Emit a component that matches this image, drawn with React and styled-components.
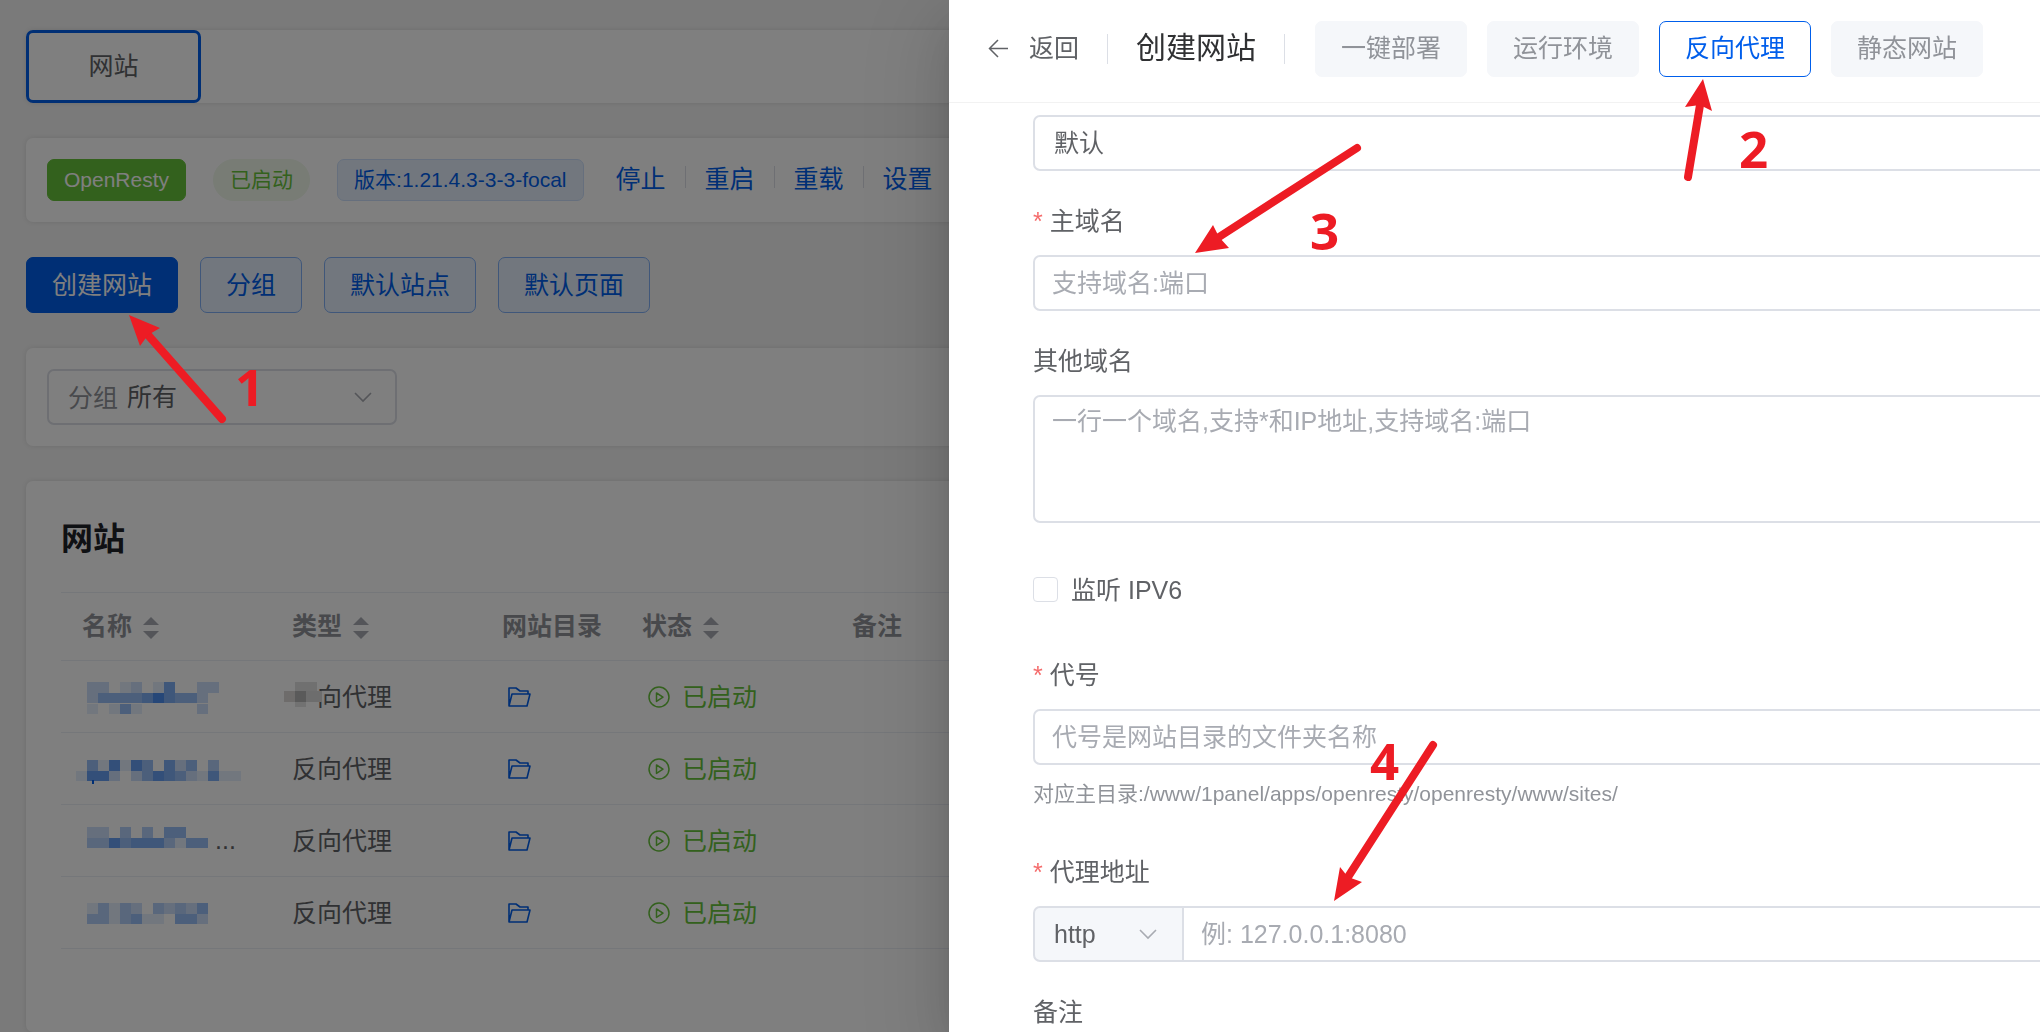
import { useState } from "react";
import styled, { createGlobalStyle, css } from "styled-components";

const PRIMARY = "#005eeb";
const SUCCESS = "#67c23a";
const DANGER = "#f56c6c";
const MARK = "#ed1c24";
const TEXT = "#606266";
const TEXT_LIGHT = "#909399";
const PLACEHOLDER = "#a8abb2";
const BORDER = "#dcdfe6";
const BORDER_LIGHT = "#ebeef5";
const FONT_SIZE = "25px";
const FONT_SIZE_SMALL = "21px";

const WEBSITE_ACTIONS = ["停止", "重启", "重载", "设置"];
const TYPES = ["一键部署", "运行环境", "反向代理", "静态网站"];

// Each digit is the ink density of one mosaic cell
const WEBSITES = [
  {
    id: 1,
    top: 2,
    cells: ["022012015002200", "024444575442000", "010141000002000"],
    hideType: true,
  },
  { id: 2, top: 8, cells: ["041616405240300", "166202465421511"], tail: true },
  { id: 3, top: 3, cells: ["022030304400", "033645553144"], more: true },
  { id: 4, top: 7, cells: ["013132032324", "033134110442"] },
];

const ARROWS = [
  { tip: [129, 315], barbs: [[140, 346], [160, 328]], notch: [148, 335], tail: [222, 419] },
  { tip: [1703, 79], barbs: [[1685, 107], [1712, 111]], notch: [1700, 105], tail: [1688, 177] },
  { tip: [1195, 253], barbs: [[1213, 225], [1229, 248]], notch: [1219, 237], tail: [1357, 148] },
  { tip: [1334, 901], barbs: [[1340, 867], [1362, 882]], notch: [1348, 877], tail: [1433, 745] },
];

const STEPS = [
  { n: 1, x: 235, y: 364 },
  { n: 2, x: 1739, y: 126 },
  { n: 3, x: 1310, y: 208 },
  { n: 4, x: 1370, y: 738 },
];

function Mosaic({ top, cells, tail }) {
  const width = cells[0].length * 11;
  return (
    <svg width={width} height="34" viewBox={`0 0 ${width} 34`} aria-hidden="true">
      {cells.map((line, y) =>
        line.split("").map((value, x) => (
          <rect
            key={`${x}-${y}`}
            x={x * 11}
            y={top + y * 11}
            width="11"
            height={y === 0 ? 11 : 10}
            fill={PRIMARY}
            fillOpacity={Number(value) / 10}
          />
        ))
      )}
      {tail && <rect x="16" y="28" width="2" height="4" fill={PRIMARY} />}
    </svg>
  );
}

function Chevron() {
  return (
    <svg width="18" height="11" viewBox="0 0 18 11" fill="none" aria-hidden="true">
      <path d="M1 1l8 8 8-8" stroke={PLACEHOLDER} strokeWidth="1.6" />
    </svg>
  );
}

function SortIcon() {
  return (
    <svg width="16" height="24" viewBox="0 0 16 24" fill={PLACEHOLDER} aria-hidden="true">
      <path d="M0 9l8-8 8 8zM0 15l8 8 8-8z" />
    </svg>
  );
}

function FolderIcon() {
  return (
    <svg width="23" height="20" viewBox="0 0 23 20" fill="none" aria-hidden="true">
      <path
        d="M1 19V1h7l4 3h8v3M1 19L4 7h18l-3 12z"
        stroke={PRIMARY}
        strokeWidth="1.6"
        strokeLinejoin="round"
      />
    </svg>
  );
}

function PlayIcon() {
  return (
    <svg width="22" height="22" viewBox="0 0 22 22" fill="none" aria-hidden="true">
      <g stroke={SUCCESS} strokeWidth="1.5" strokeLinejoin="round">
        <circle cx="11" cy="11" r="10" />
        <path d="M8.5 7v8.4l6.5-4.2z" />
      </g>
    </svg>
  );
}

function BackIcon() {
  return (
    <svg width="21" height="19" viewBox="0 0 21 19" fill="none" aria-hidden="true">
      <path d="M20 9.5H1.5M10 1L1.5 9.5 10 18" stroke={TEXT} strokeWidth="1.5" />
    </svg>
  );
}

function WebsiteTable() {
  return (
    <TABLE>
      <colgroup>
        <col width="210" />
        <col width="210" />
        <col width="140" />
        <col width="210" />
        <col />
      </colgroup>
      <thead>
        <tr>
          <th>
            名称 <SortIcon />
          </th>
          <th>
            类型 <SortIcon />
          </th>
          <th>网站目录</th>
          <th>
            状态 <SortIcon />
          </th>
          <th>备注</th>
        </tr>
      </thead>
      <tbody>
        {WEBSITES.map((site) => (
          <tr key={site.id}>
            <td>
              <NAME>
                <Mosaic top={site.top} cells={site.cells} tail={site.tail} />
                {site.more && <span>...</span>}
              </NAME>
            </td>
            <td>
              <TYPE>
                反向代理
                {site.hideType && (
                  <svg width="38" height="34" viewBox="0 0 38 34" aria-hidden="true">
                    <path d="M8 0h26v34H8z" fill="#fff" />
                    <path d="M0 13h11v11H0z" fill="#dcd9d6" />
                    <path d="M11 4h22v9H11z" fill="#e0e0e0" />
                    <path d="M11 13h11v11H11z" fill="#b4b4b4" />
                    <path d="M22 13h16v11H22z" fill="#dadada" />
                    <path d="M11 24h11v5H11z" fill="#e4e4e4" />
                  </svg>
                )}
              </TYPE>
            </td>
            <td>
              <FOLDER type="button" aria-label="网站目录">
                <FolderIcon />
              </FOLDER>
            </td>
            <td>
              <STATUS type="button">
                <PlayIcon />
                <span>已启动</span>
              </STATUS>
            </td>
            <td />
          </tr>
        ))}
      </tbody>
    </TABLE>
  );
}

function CreateDrawer() {
  const [type, setType] = useState("反向代理");

  return (
    <DRAWER role="dialog" aria-label="创建网站">
      <DRAWER_HEADER>
        <BACK type="button">
          <BackIcon />
          <span>返回</span>
        </BACK>
        <DIVIDER />
        <h2>创建网站</h2>
        <DIVIDER />
        <TYPE_LIST>
          {TYPES.map((name) => (
            <TYPE_BUTTON
              key={name}
              type="button"
              $active={name === type}
              onClick={() => setType(name)}
            >
              {name}
            </TYPE_BUTTON>
          ))}
        </TYPE_LIST>
      </DRAWER_HEADER>

      <FORM onSubmit={(e) => e.preventDefault()}>
        <SELECT aria-label="分组">
          <option>默认</option>
        </SELECT>

        <FIELD>
          <LABEL htmlFor="primaryDomain" $required>
            主域名
          </LABEL>
          <INPUT id="primaryDomain" placeholder="支持域名:端口" />
        </FIELD>

        <FIELD>
          <LABEL htmlFor="otherDomains">其他域名</LABEL>
          <TEXTAREA
            id="otherDomains"
            placeholder="一行一个域名,支持*和IP地址,支持域名:端口"
          />
        </FIELD>

        <CHECK>
          <input id="ipv6" type="checkbox" />
          <label htmlFor="ipv6">监听 IPV6</label>
        </CHECK>

        <FIELD>
          <LABEL htmlFor="alias" $required>
            代号
          </LABEL>
          <INPUT id="alias" placeholder="代号是网站目录的文件夹名称" />
          <HELP>对应主目录:/www/1panel/apps/openresty/openresty/www/sites/</HELP>
        </FIELD>

        <FIELD>
          <LABEL htmlFor="proxy" $required>
            代理地址
          </LABEL>
          <INPUT_GROUP>
            <PREPEND>
              <select aria-label="协议">
                <option>http</option>
                <option>https</option>
              </select>
              <Chevron />
            </PREPEND>
            <INPUT id="proxy" placeholder="例: 127.0.0.1:8080" />
          </INPUT_GROUP>
        </FIELD>

        <FIELD>
          <LABEL htmlFor="remark">备注</LABEL>
          <INPUT id="remark" />
        </FIELD>
      </FORM>
    </DRAWER>
  );
}

function Annotations() {
  return (
    <MARKS>
      <svg width="100%" height="100%" aria-hidden="true">
        {ARROWS.map(({ tip, barbs, notch, tail }) => (
          <g key={tip.join()} fill={MARK} stroke={MARK}>
            <path
              d={`M${notch} L${tail}`}
              strokeWidth="8"
              strokeLinecap="round"
            />
            <path
              d={`M${tip} L${barbs[0]} L${notch} L${barbs[1]} Z`}
              stroke="none"
            />
          </g>
        ))}
      </svg>
      {STEPS.map((step) => (
        <STEP key={step.n} $x={step.x} $y={step.y}>
          {step.n}
        </STEP>
      ))}
    </MARKS>
  );
}

export default function App() {
  return (
    <>
      <GlobalStyle />
      <PAGE>
        <CARD $flush>
          <TAB type="button">网站</TAB>
        </CARD>

        <CARD>
          <STATUS_BAR>
            <TAG $kind="dark">OpenResty</TAG>
            <TAG $kind="success">已启动</TAG>
            <TAG $kind="primary">版本:1.21.4.3-3-3-focal</TAG>
            <LINKS>
              {WEBSITE_ACTIONS.map((name) => (
                <button key={name} type="button">
                  {name}
                </button>
              ))}
            </LINKS>
          </STATUS_BAR>
        </CARD>

        <TOOLBAR>
          <BUTTON type="button" $primary>
            创建网站
          </BUTTON>
          <BUTTON type="button">分组</BUTTON>
          <BUTTON type="button">默认站点</BUTTON>
          <BUTTON type="button">默认页面</BUTTON>
        </TOOLBAR>

        <CARD>
          <FILTER>
            <label htmlFor="group">分组</label>
            <select id="group">
              <option>所有</option>
            </select>
            <Chevron />
          </FILTER>
        </CARD>

        <CARD $grow>
          <CONTENT>
            <h1>网站</h1>
            <WebsiteTable />
          </CONTENT>
        </CARD>
      </PAGE>
      <OVERLAY>
        <CreateDrawer />
      </OVERLAY>
      <Annotations />
    </>
  );
}

const GlobalStyle = createGlobalStyle`
  * {
    box-sizing: border-box;
  }

  body {
    margin: 0;
    overflow: hidden;
    background-color: #f4f4f4;
    color: ${TEXT};
    font-family: "Liberation Sans", "Noto Sans CJK SC", sans-serif;
    font-size: ${FONT_SIZE};
  }

  button,
  input,
  select,
  textarea {
    font: inherit;
    color: inherit;
    margin: 0;
  }

  button {
    cursor: pointer;
    padding: 0;
    border: 0;
    background: none;
  }

  svg {
    flex-shrink: 0;
  }
`;

const PAGE = styled.main`
  display: flex;
  flex-direction: column;
  gap: 35px;
  height: 100vh;
  padding: 30px 26px 0;
  overflow: hidden;
`;

const CARD = styled.section`
  flex: ${(props) => (props.$grow ? "1 0 auto" : "0 0 auto")};
  padding: ${(props) => (props.$flush ? "0" : "21px")};
  border-radius: 7px;
  background-color: #fff;
  box-shadow: 0 0 5px rgba(0, 0, 0, 0.1);
`;

const TAB = styled.button`
  width: 175px;
  height: 73px;
  padding-bottom: 6px;
  border: 3px solid ${PRIMARY};
  border-radius: 7px;
`;

const STATUS_BAR = styled.div`
  display: flex;
  align-items: center;
`;

const TAG = styled.span`
  height: 42px;
  padding: 0 16px;
  margin-right: 27px;
  border: 1px solid;
  border-radius: 7px;
  line-height: 40px;
  font-size: ${FONT_SIZE_SMALL};

  ${(props) =>
    props.$kind === "dark" &&
    css`
      color: #fff;
      border-color: ${SUCCESS};
      background-color: ${SUCCESS};
    `}

  ${(props) =>
    props.$kind === "success" &&
    css`
      color: ${SUCCESS};
      border-color: #f0f9eb;
      border-radius: 21px;
      background-color: #f0f9eb;
    `}

  ${(props) =>
    props.$kind === "primary" &&
    css`
      color: ${PRIMARY};
      border-color: #ccdffb;
      background-color: #e5effd;
    `}
`;

const LINKS = styled.div`
  display: flex;
  align-items: center;
  margin-left: 5px;

  button {
    padding-bottom: 3px;
    color: ${PRIMARY};
    line-height: 36px;
  }

  button + button::before {
    content: "";
    display: inline-block;
    width: 1px;
    height: 22px;
    margin: 0 19px;
    background-color: ${BORDER};
  }
`;

const TOOLBAR = styled.div`
  display: flex;
  gap: 22px;
`;

const BUTTON = styled.button`
  height: 56px;
  padding: 0 25px 5px;
  border: 1px solid ${(props) => (props.$primary ? PRIMARY : "#80aff5")};
  border-radius: 7px;
  color: ${(props) => (props.$primary ? "#fff" : PRIMARY)};
  background-color: ${(props) => (props.$primary ? PRIMARY : "#e5effd")};
`;

const FILTER = styled.div`
  display: flex;
  align-items: center;
  width: 350px;
  height: 56px;
  padding: 0 23px 0 19px;
  border: 2px solid ${BORDER};
  border-radius: 7px;

  label {
    padding-bottom: 2px;
    margin-right: 9px;
    color: ${TEXT_LIGHT};
  }

  select {
    flex: 1;
    padding: 0;
    border: 0;
    appearance: none;
    background: none;
  }
`;

const CONTENT = styled.div`
  padding: 14px;

  h1 {
    margin: 0 0 30px;
    color: #1f2329;
    font-size: 32px;
    line-height: 46px;
  }
`;

const TABLE = styled.table`
  width: 100%;
  table-layout: fixed;
  border-collapse: collapse;
  border-top: 1px solid ${BORDER_LIGHT};

  th,
  td {
    height: 72px;
    padding: 0 0 0 21px;
    border-bottom: 1px solid ${BORDER_LIGHT};
    text-align: left;
    white-space: nowrap;
  }

  th {
    height: 68px;
    padding-bottom: 6px;
    color: ${TEXT_LIGHT};
  }

  th svg {
    margin-left: 4px;
    vertical-align: middle;
  }
`;

const NAME = styled.div`
  display: flex;
  align-items: center;
  margin-left: -6px;

  span {
    margin-left: 7px;
  }
`;

const TYPE = styled.div`
  position: relative;
  padding-bottom: 4px;

  svg {
    position: absolute;
    top: 1px;
    left: -8px;
  }
`;

const FOLDER = styled.button`
  display: block;
  margin-left: 6px;

  svg {
    display: block;
  }
`;

const STATUS = styled.button`
  display: flex;
  align-items: center;
  gap: 12px;
  margin-left: 6px;
  color: ${SUCCESS};

  span {
    padding-bottom: 3px;
  }
`;

const OVERLAY = styled.div`
  position: fixed;
  inset: 0;
  display: flex;
  justify-content: flex-end;
  background-color: rgba(0, 0, 0, 0.5);
`;

const DRAWER = styled.aside`
  display: flex;
  flex-direction: column;
  width: calc(50% + 71px);
  overflow: hidden;
  background-color: #fff;
  box-shadow:
    0 28px 84px 28px rgba(0, 0, 0, 0.08),
    0 21px 56px rgba(0, 0, 0, 0.12),
    0 14px 28px -14px rgba(0, 0, 0, 0.16);
`;

const DRAWER_HEADER = styled.header`
  display: flex;
  flex-shrink: 0;
  align-items: center;
  height: 103px;
  padding: 0 0 5px 39px;
  border-bottom: 1px solid #f2f2f2;

  h2 {
    padding-bottom: 7px;
    margin: 0;
    color: #303133;
    font-size: 30px;
    font-weight: 400;
    white-space: nowrap;
  }
`;

const BACK = styled.button`
  display: flex;
  align-items: center;
  gap: 20px;
  white-space: nowrap;

  span {
    padding-bottom: 5px;
  }
`;

const DIVIDER = styled.span`
  flex-shrink: 0;
  width: 1px;
  height: 30px;
  margin: 0 28px;
  background-color: ${BORDER};
`;

const TYPE_LIST = styled.div`
  display: flex;
  gap: 20px;
  padding-left: 2px;
`;

const TYPE_BUTTON = styled.button`
  height: 56px;
  padding: 0 25px 5px;
  border: 1px solid ${(props) => (props.$active ? PRIMARY : "#f5f7fa")};
  border-radius: 7px;
  color: ${(props) => (props.$active ? PRIMARY : TEXT_LIGHT)};
  background-color: ${(props) => (props.$active ? "#fff" : "#f5f7fa")};
  white-space: nowrap;
`;

// The fields run on past the edge of the drawer
const FORM = styled.form`
  display: flex;
  flex-direction: column;
  gap: 31px;
  margin-right: -32px;
  padding: 12px 0 0 84px;
`;

const control = css`
  display: block;
  width: 100%;
  height: 56px;
  padding: 0 17px;
  border: 2px solid ${BORDER};
  border-radius: 7px;
  outline: none;
  background-color: #fff;

  &::placeholder {
    color: ${PLACEHOLDER};
  }
`;

const INPUT = styled.input`
  ${control}
`;

const SELECT = styled.select`
  ${control}
  padding: 0 19px;
  appearance: none;
`;

const TEXTAREA = styled.textarea`
  ${control}
  height: 128px;
  padding: 6px 17px;
  line-height: 37px;
  resize: none;
`;

const FIELD = styled.div`
  display: flex;
  flex-direction: column;
`;

const LABEL = styled.label`
  margin-bottom: 14px;
  line-height: 39px;

  ${(props) =>
    props.$required &&
    css`
      &::before {
        content: "*";
        margin-right: 7px;
        color: ${DANGER};
      }
    `}
`;

const CHECK = styled.div`
  display: flex;
  align-items: center;
  gap: 13px;
  height: 71px;

  input {
    width: 25px;
    height: 25px;
    border: 1px solid ${BORDER};
    border-radius: 4px;
    appearance: none;
    background-color: #fff;
  }

  input:checked {
    background-color: ${PRIMARY};
  }

  label {
    padding-bottom: 4px;
  }
`;

const HELP = styled.span`
  color: ${TEXT_LIGHT};
  font-size: ${FONT_SIZE_SMALL};
  line-height: 57px;
`;

const INPUT_GROUP = styled.div`
  display: flex;

  > input {
    flex: 1;
    border-left: 0;
    border-radius: 0 7px 7px 0;
  }
`;

const PREPEND = styled.div`
  display: flex;
  flex-shrink: 0;
  align-items: center;
  width: 151px;
  padding: 0 25px 0 19px;
  border: 2px solid ${BORDER};
  border-radius: 7px 0 0 7px;
  background-color: #f5f7fa;

  select {
    flex: 1;
    min-width: 0;
    padding: 0;
    border: 0;
    appearance: none;
    background: none;
  }
`;

const MARKS = styled.div`
  position: fixed;
  inset: 0;
  pointer-events: none;
`;

const STEP = styled.span`
  position: absolute;
  left: ${(props) => props.$x}px;
  top: ${(props) => props.$y}px;
  color: ${MARK};
  font-family: "Open Sans", "Noto Sans", sans-serif;
  font-size: 51px;
  font-weight: 700;
  line-height: 44px;
`;
